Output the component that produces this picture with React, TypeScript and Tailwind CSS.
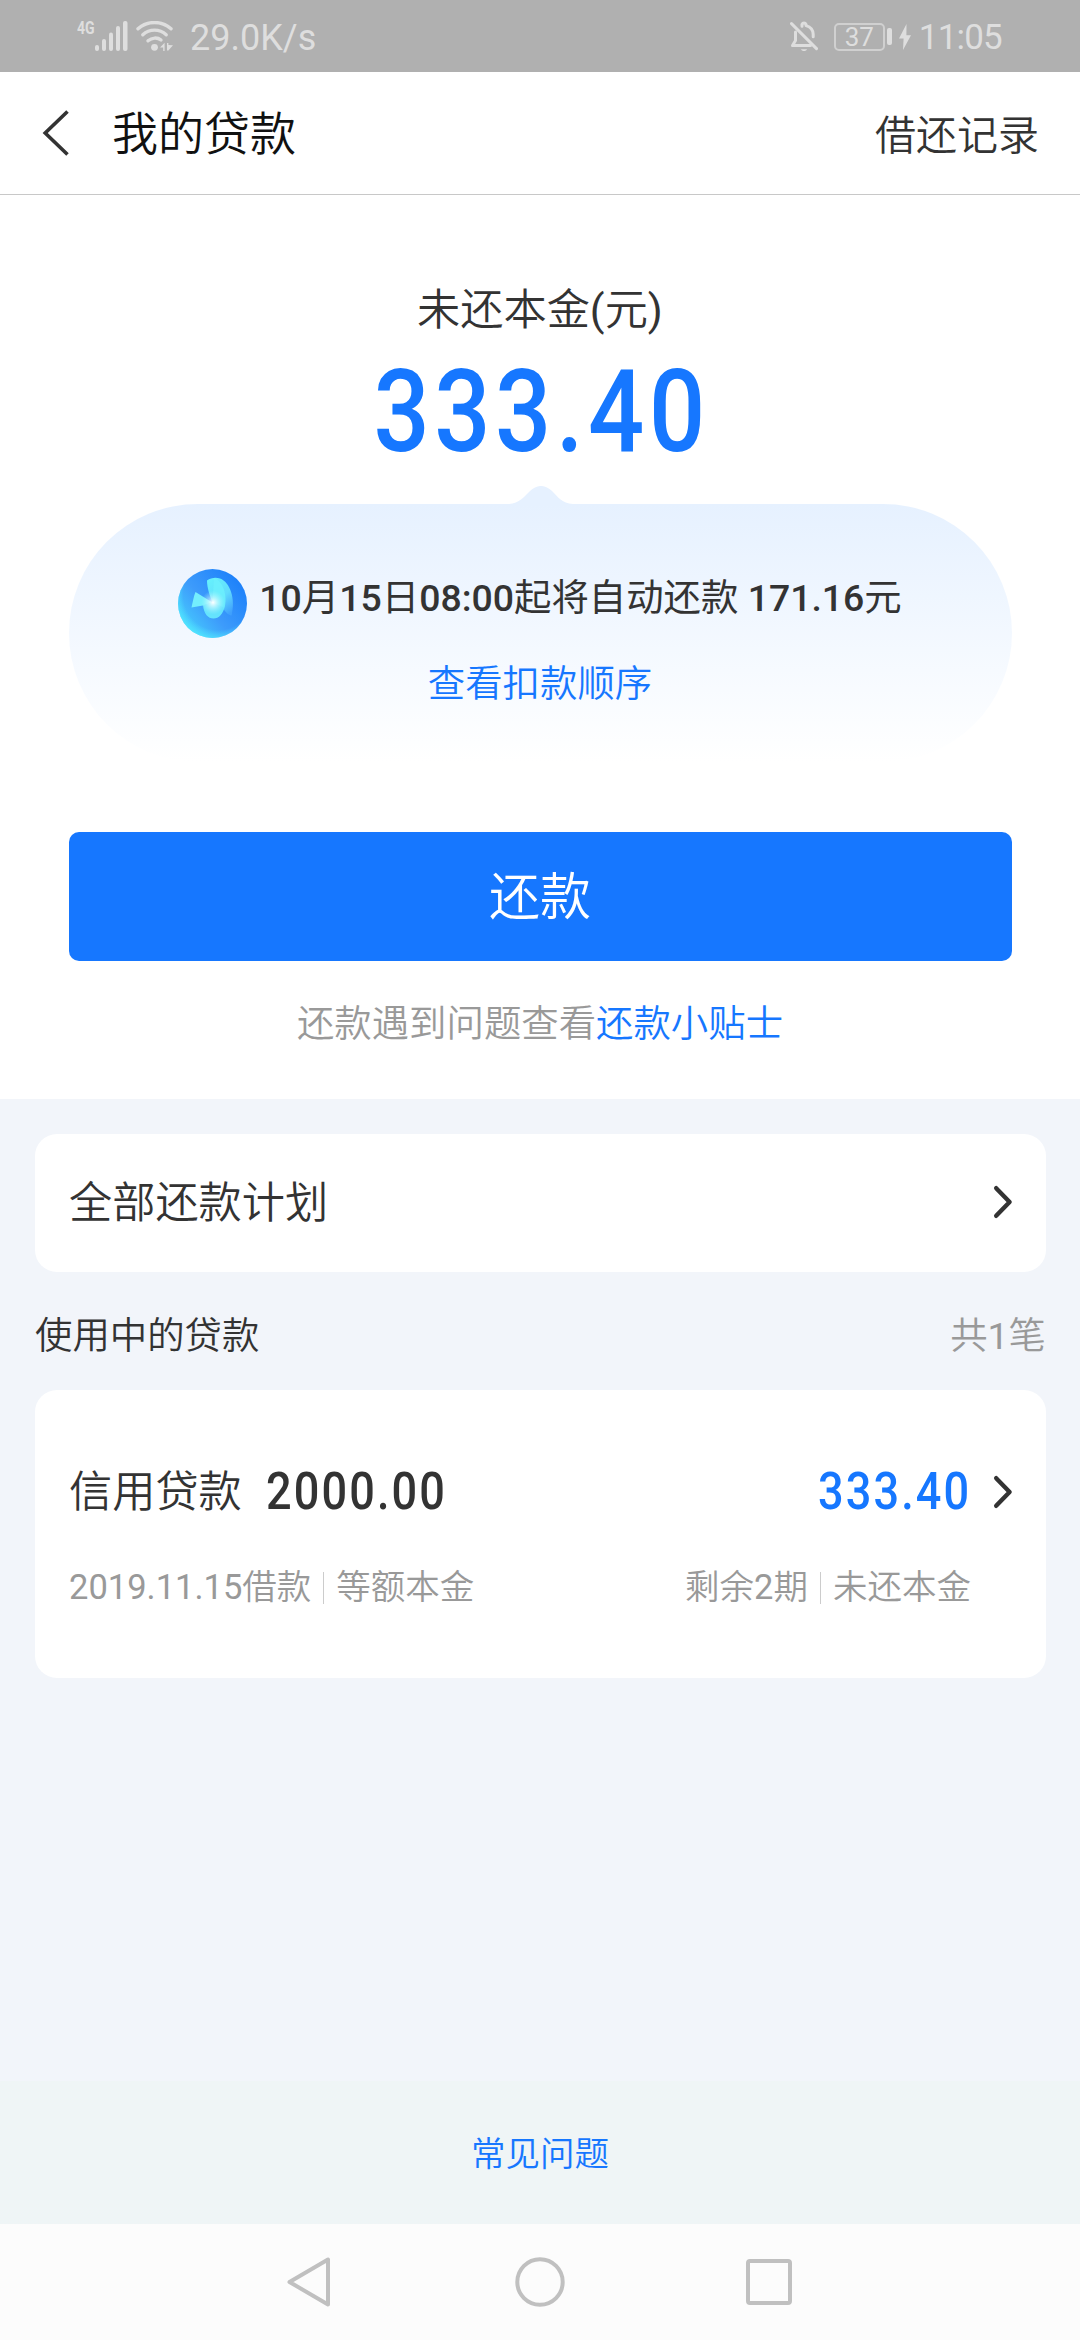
import { clsx } from "clsx";

function SignalIcon() {
  return (
    <svg width="33" height="30" viewBox="0 0 33 30" fill="#dedede">
      <rect x="0" y="24" width="4" height="6" rx="2" />
      <rect x="7" y="18" width="4" height="12" rx="2" />
      <rect x="14" y="11.5" width="4" height="18.5" rx="2" />
      <rect x="21" y="5" width="4" height="25" rx="2" />
      <rect x="28" y="0" width="4.5" height="30" rx="2" />
    </svg>
  );
}

function WifiIcon() {
  return (
    <svg width="38" height="30" viewBox="0 0 38 30" fill="none" stroke="#dedede" strokeWidth="3.4" strokeLinecap="round">
      <path d="M2 7.8C11.5-.6 25.5-.6 35 7.8" />
      <path d="M6.8 13.8c6.8-6.2 16.6-6.2 23.4 0" />
      <path d="M12 19.8c4-3.4 9.5-3.6 13-.8" />
      <circle cx="18.5" cy="26.3" r="3.4" fill="#dedede" stroke="none" />
      <path d="M24 26.5l4.6-4.7v8.2h-1.4v-3.5zM31 22h1.4v2l4.6 .2-4.6 5.3H31z" fill="#dedede" stroke="none" />
    </svg>
  );
}

function BellOffIcon() {
  return (
    <svg width="28" height="31" viewBox="0 0 28 31" fill="none" stroke="#dedede" strokeWidth="3" strokeLinecap="round" strokeLinejoin="round">
      <path d="M1.5 2.6l25 25" />
      <path d="M5.5 11v8.500L2.500 24.600h18" />
      <path d="M12 5.2V3.4a2.200 2.200 0 0 1 4 0v1.200c4.400 1.200 7.200 4.600 7.200 9v2.200" />
      <path d="M11 28.200h6c-.6 2.400-5.400 2.400-6 0z" fill="#dedede" stroke="none" />
    </svg>
  );
}

function StatusBar() {
  return (
    <div className="flex h-[72px] items-start bg-[#b0b0b0] pl-[77px] pr-[78px] pt-[21px] text-[#dedede]">
      <span className="-mt-[2px] w-[18px] text-[18px] font-bold leading-[18px]">
        <span className="inline-block origin-left scale-x-[.78]">4G</span>
      </span>
      <SignalIcon />
      <div className="ml-2">
        <WifiIcon />
      </div>
      <span className="ml-4 text-[36px] leading-[34px]">29.0K/s</span>
      <div className="ml-auto">
        <BellOffIcon />
      </div>
      <div className="ml-4 mt-[2px] flex h-[28px] w-[51px] items-center justify-center rounded-[5px] border-2 border-[#d0d0d0] text-[26px] leading-none">
        37
      </div>
      <div className="ml-[2px] mt-[7px] h-[17px] w-[5px] rounded-[2px] bg-[#dedede]" />
      <svg className="ml-[7px] mt-[3px]" width="12" height="26" viewBox="0 0 12 26" fill="#dedede">
        <path d="M7.5 0L0 14.5h4.6L4 26l8-14.8H7.4z" />
      </svg>
      <span className="ml-2 text-[35px] leading-[34px] tracking-[-0.8px]">11:05</span>
    </div>
  );
}

function FishIcon() {
  return (
    <svg width="69" height="69" viewBox="0 0 69 69">
      <defs>
        <linearGradient id="ball" x1="0.95" y1="0.2" x2="0.15" y2="0.85">
          <stop offset="0" stopColor="#1c80fa" />
          <stop offset="0.6" stopColor="#3d9bfb" />
          <stop offset="1" stopColor="#45c8fd" />
        </linearGradient>
        <radialGradient id="rim" cx="0.58" cy="0.38" r="0.68">
          <stop offset="0.74" stopColor="#55f0ff" stopOpacity="0" />
          <stop offset="1" stopColor="#55f0ff" stopOpacity="0.9" />
        </radialGradient>
        <linearGradient id="fin" x1="0.2" y1="0" x2="0.8" y2="1">
          <stop offset="0" stopColor="#66f0fc" />
          <stop offset="0.55" stopColor="#62dcfd" />
          <stop offset="1" stopColor="#3fa0fc" />
        </linearGradient>
        <radialGradient id="glow">
          <stop offset="0" stopColor="#ffffff" />
          <stop offset="1" stopColor="#a8f6ff" stopOpacity="0" />
        </radialGradient>
      </defs>
      <circle cx="34.5" cy="34.5" r="34.5" fill="url(#ball)" />
      <circle cx="34.5" cy="34.5" r="34.5" fill="url(#rim)" />
      <path d="M29 11.5C33 8.5 38 8 42 9.5C52 13 58 30 53.5 46.5C50 46 46 42 45 38L34.5 33.5C32 27 29 19 29 11.5Z" fill="url(#fin)" />
      <path d="M34.5 33.5L36 9C46 12 49 28 47 37C45 45 41 49.500 35.5 49.500C30 49.500 26 45 25 36Z" fill="#6cf0fd" fillOpacity="0.85" />
      <path d="M17.5 23L34.5 33.5L25 36.5L13.5 38.5C15 32 15.5 28 17.5 23Z" fill="#74eefd" />
      <circle cx="35" cy="33.5" r="12" fill="url(#glow)" />
    </svg>
  );
}

function ChevronIcon() {
  return (
    <svg className="-translate-y-px" width="20" height="34" viewBox="0 0 20 34" fill="none" stroke="#333" strokeWidth="4.4" strokeLinecap="round" strokeLinejoin="round">
      <path d="M3.2 3.2L16.6 17L3.2 30.8" />
    </svg>
  );
}

interface AmountProps {
  value: string;
  className?: string;
}

// narrow, widely spaced digits, close to the DIN face used for money
function Amount({ value, className }: AmountProps) {
  return <span className={clsx("inline-block scale-x-[.86] font-medium tracking-[.047em]", className)}>{value}</span>;
}

function Divider() {
  return <span className="h-8 w-px bg-[#ccc]" />;
}

export default function App() {
  return (
    <div className="flex h-[2340px] w-[1080px] flex-col overflow-hidden bg-white font-['Roboto','Noto_Sans_CJK_SC',sans-serif] text-[#333]">
      <StatusBar />

      <header className="flex h-[123px] items-center border-b border-[#c8c8c8] pl-[42px] pr-[41px]">
        <svg width="28" height="46" viewBox="0 0 28 46" fill="none" stroke="#333" strokeWidth="3.6">
          <path d="M25.5 1.5L3.2 23L25.5 44.5" />
        </svg>
        <h1 className="ml-[42px] pt-[3px] text-[46px] font-[350] text-[#111]">我的贷款</h1>
        <span className="ml-auto pt-[6px] text-[41px] font-[350] leading-[60px]">借还记录</span>
      </header>

      <section className="flex flex-col items-center pb-[45px] pt-[86px]">
        <div className="h-[60px] text-[43.2px] font-[350] leading-[60px]">
          未还本金<span className="font-normal">(</span>元<span className="font-normal">)</span>
        </div>
        <div className="mt-3 h-[117px] pl-[3px] text-[#1677ff]">
          <Amount value="333.40" className="text-[115px] leading-[117px]" />
        </div>

        <div className="relative mt-[34px] flex h-[258px] w-[943px] flex-col items-center rounded-full bg-linear-to-b from-[#e6f1ff] to-white pt-[65px]">
          <svg className="absolute -top-[18px] left-[440px]" width="64" height="19" viewBox="0 0 64 19" fill="#e6f1ff">
            <path d="M0 19V18C10 17.5 16 10 21 5C28-1.7 36-1.7 43 5C48 10 53 17.5 64 18V19Z" />
          </svg>
          <div className="flex h-[70px] items-start">
            <FishIcon />
            <span className="ml-3 whitespace-nowrap text-[37.4px] leading-[58px]">
              <b className="font-medium">10</b>月<b className="font-medium">15</b>日<b className="font-medium">08:00</b>
              起将自动还款 <b className="font-medium">171.16</b>元
            </span>
          </div>
          <a className="mt-[15px] text-[37.4px] font-[350] leading-[60px] text-[#1677ff]">查看扣款顺序</a>
        </div>

        <button className="mt-[70px] h-[129px] w-[943px] rounded-[10px] bg-[#1677ff] pt-1 text-[51px] font-[350] text-white">
          还款
        </button>
        <p className="mt-[33px] text-[37.4px] font-[350] leading-[60px] text-[#999]">
          还款遇到问题查看<a className="text-[#1677ff]">还款小贴士</a>
        </p>
      </section>

      <section className="flex-1 bg-[#f2f5fa] pl-[35px] pr-[34px] pt-[35px]">
        <div className="flex h-[138px] items-center justify-between rounded-[22px] bg-white pl-[34px] pr-[33px]">
          <span className="pt-[2px] text-[43.2px] font-[350]">全部还款计划</span>
          <ChevronIcon />
        </div>

        <div className="flex h-[118px] items-center justify-between pt-[10px] text-[37.4px] font-[350]">
          <span>使用中的贷款</span>
          <span className="text-[#999]">
            共<span className="font-normal">1</span>笔
          </span>
        </div>

        <div className="h-[288px] rounded-[22px] bg-white pl-[34px] pr-[33px] pt-[73px]">
          <div className="flex h-[60px] items-center">
            <span className="text-[43.2px] font-[350]">信用贷款</span>
            <Amount value="2000.00" className="ml-[24px] origin-left text-[52.4px] leading-[54px] -translate-y-[2px]" />
            <Amount value="333.40" className="ml-auto origin-right text-[52.4px] leading-[54px] -translate-y-[2px] text-[#1677ff]" />
            <div className="ml-[22px]">
              <ChevronIcon />
            </div>
          </div>
          <div className="mt-[35px] flex h-[60px] items-center justify-between pr-[42px] text-[34.5px] font-[350] text-[#999]">
            <div className="flex items-center gap-3">
              <span>
                <span className="font-normal">2019.11.15</span>借款
              </span>
              <Divider />
              <span>等额本金</span>
            </div>
            <div className="flex items-center gap-3">
              <span>
                剩余<span className="font-normal">2</span>期
              </span>
              <Divider />
              <span>未还本金</span>
            </div>
          </div>
        </div>
      </section>

      <footer className="flex h-[143px] items-center justify-center bg-[#eff5f6] pt-1 text-[34.5px] font-[350] text-[#1677ff]">
        常见问题
      </footer>

      <nav className="flex h-[116px] items-center justify-center gap-[180px] bg-[#fcfcfc]">
        <svg width="50" height="50" viewBox="0 0 50 50" fill="none" stroke="#c0c0c0" strokeWidth="4" strokeLinejoin="round">
          <path d="M4.500 25L43 2.500V47.500Z" />
        </svg>
        <svg width="50" height="50" viewBox="0 0 50 50" fill="none" stroke="#c0c0c0" strokeWidth="4">
          <circle cx="25" cy="25" r="22.7" />
        </svg>
        <svg width="50" height="50" viewBox="0 0 50 50" fill="none" stroke="#c0c0c0" strokeWidth="4">
          <rect x="3" y="4" width="42" height="42" rx="2" />
        </svg>
      </nav>
    </div>
  );
}
